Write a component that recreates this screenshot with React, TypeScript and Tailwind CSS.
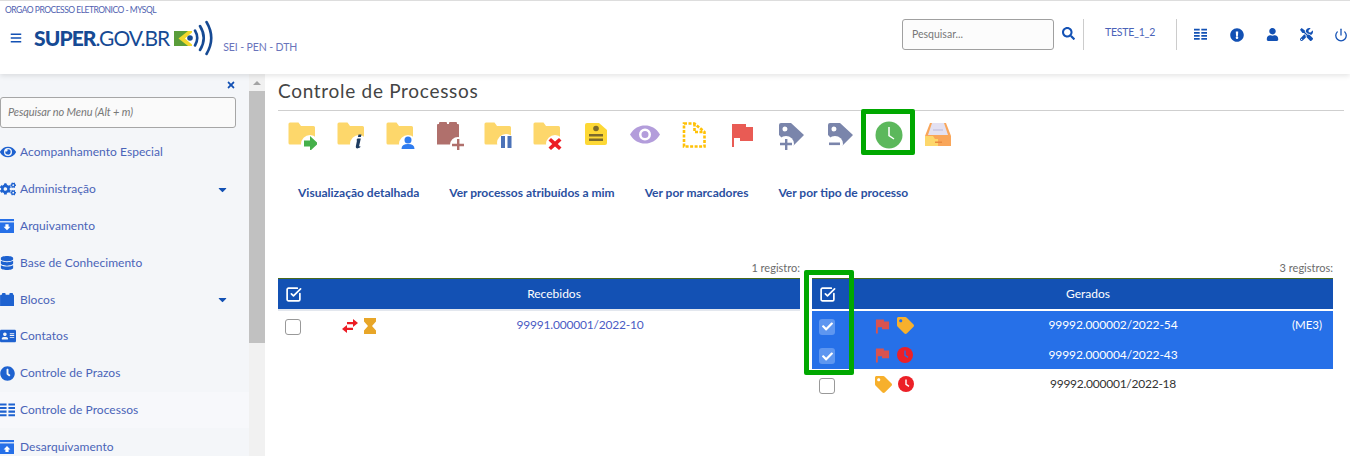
import {
  FaBars, FaCaretDown, FaCheck, FaCogs, FaDatabase, FaExclamationCircle, FaEye,
  FaSearch, FaTag, FaTimes, FaTools, FaUser, FaAddressCard, FaClock,
} from "react-icons/fa";
import { Power, SquareCheckBig } from "lucide-react";
import type { ReactNode } from "react";

const Grid = ({ className = "" }: { className?: string }) => (
  <svg viewBox="0 0 16 14" className={className} fill="currentColor">
    <path d="M0 0h7v2.200H0zM9 0h7v2.200H9zM0 3.800h7V6H0zM9 3.800h7V6H9zM0 7.600h7v2.200H0zM9 7.600h7v2.200H9zM0 11.400h7v2.200H0zM9 11.400h7v2.200H9z" />
  </svg>
);

const Flag = ({ color, className = "" }: { color: string; className?: string }) => (
  <svg viewBox="0 0 16 16" className={className} fill={color}>
    <path d="M1 1h8.500v2.200H15v8.300H7.500V9.400H3V16H1z" />
  </svg>
);

const Lego = ({ className = "" }: { className?: string }) => (
  <svg viewBox="0 0 16 14" className={className} fill="currentColor">
    <path d="M0 3q0-1 1-1h1V1q0-1 1-1h2q1 0 1 1v1h4V1q0-1 1-1h2q1 0 1 1v1h.500q.500 0 .500 1v11H0z" />
  </svg>
);

const BoxIcon = ({ up = false, className = "" }: { up?: boolean; className?: string }) => (
  <svg viewBox="0 0 14 14" className={className}>
    <path d="M0 0h14v2.200H0z" fill="#2670e8" />
    <path d="M0 3.400h14V14H0z" fill="#2670e8" />
    {up ? <path d="M7 6l3.400 3.400H8.600V12H5.400V9.400H3.600z" fill="#fff" /> : <path d="M5.400 5.200h3.200v2.600h1.800L7 11.200 3.600 7.800h1.800z" fill="#fff" />}
  </svg>
);

const ClockDisc = ({ bg, hand, className = "" }: { bg: string; hand: string; className?: string }) => (
  <svg viewBox="0 0 16 16" className={className}>
    <circle cx="8" cy="8" r="8" fill={bg} />
    <path d="M8 3.600V8.400l3 2" fill="none" stroke={hand} strokeWidth="1.400" />
  </svg>
);

const Folder = ({ children }: { children: ReactNode }) => (
  <svg viewBox="0 0 30 30" className="w-[30px] h-[30px]">
    <path d="M1.500 4q0-1.500 1.500-1.500h8.500L14 6h12.500q1.500 0 1.500 1.500V23q0 1.500-1.500 1.500H3q-1.500 0-1.500-1.500z" fill="#fdd76b" />
    {children}
  </svg>
);

const toolbar: ReactNode[] = [
  <Folder key="enviar">
    <circle cx="23" cy="24" r="9" fill="#fff" />
    <path d="M17 20.500h6V16l8 7.500-8 7.500v-4.500h-6z" fill="#45b04a" />
  </Folder>,
  <Folder key="info">
    <circle cx="23" cy="24" r="9" fill="#fff" />
    <path d="M22.500 14.500h3l-.6 2.500h-3zM21.500 18.500h3.300l-1.800 8 1.400-.5-.3 1.600c-3 1.500-4.800.8-4.200-1.500l1.200-6-1 .3z" fill="#1d3b5f" />
  </Folder>,
  <Folder key="atribuir">
    <circle cx="23" cy="24" r="9" fill="#fff" />
    <circle cx="23" cy="20" r="3.500" fill="#2f7cf0" />
    <path d="M16.500 29q0-5 6.500-5t6.500 5z" fill="#2f7cf0" />
  </Folder>,
  <svg key="bloco" viewBox="0 0 30 30" className="w-[30px] h-[30px]">
    <path d="M3 5q0-1 1-1h1V3q0-1 1-1h6q1 0 1 1v1h2V3q0-1 1-1h6q1 0 1 1v1h1q1 0 1 1v19.500H3z" fill="#b0706c" />
    <circle cx="24" cy="25" r="8" fill="#fff" />
    <path d="M23 19h2.400v4.800H30v2.400h-4.600V31H23v-4.800h-5v-2.400h5z" fill="#b0706c" />
  </svg>,
  <Folder key="sobrestar">
    <circle cx="23" cy="23" r="9" fill="#fff" />
    <path d="M18 16h4v12h-4zM24.500 16h4v12h-4z" fill="#4b72b8" />
  </Folder>,
  <Folder key="concluir">
    <circle cx="23" cy="24" r="9" fill="#fff" />
    <path d="M19 18l4 3.500 4-3.500 2.500 2.500L25.800 24l3.700 3.500L27 30l-4-3.500-4 3.500-2.500-2.500L20.200 24l-3.700-3.500z" fill="#ec1c24" />
  </Folder>,
  <svg key="anotacao" viewBox="0 0 30 30" className="w-[30px] h-[30px]">
    <path d="M4 5q0-2 2-2h12l8 7v13q0 2-2 2H6q-2 0-2-2z" fill="#fdd835" />
    <circle cx="15" cy="8.500" r="2.800" fill="#7c6a2c" />
    <path d="M8 14h14v2.500H8zM8 18.500h14V21H8z" fill="#7c6a2c" />
  </svg>,
  <svg key="olho" viewBox="0 0 30 30" className="w-[30px] h-[30px]">
    <path fillRule="evenodd" d="M0 14.500C4 8 9 5.500 15 5.500s11 2.500 15 9c-4 6.500-9 9-15 9s-11-2.500-15-9zM15 8.500a6 6 0 1 0 0 12 6 6 0 0 0 0-12zM15 11a3.500 3.500 0 1 1 0 7 3.500 3.500 0 0 1 0-7z" fill="#b39ddb" />
  </svg>,
  <svg key="doc" viewBox="0 0 30 30" className="w-[30px] h-[30px]">
    <path d="M5 3.500h10.500l10 8.500v14.500H5zM15.500 3.500v8.500h10" fill="none" stroke="#ffc107" strokeWidth="2.600" strokeDasharray="3 1.500" />
  </svg>,
  <svg key="marcador" viewBox="0 0 30 30" className="w-[30px] h-[30px]">
    <path d="M5 4h14v3h7v14H13v-3H7v9H5z" fill="#e95b54" />
  </svg>,
  <svg key="tagmais" viewBox="0 0 30 30" className="w-[30px] h-[30px]">
    <path fillRule="evenodd" d="M3 5q0-2 2-2h10l13 12-11 11H14L3 15zM9 6.500a2.500 2.500 0 1 0 0 5 2.500 2.500 0 0 0 0-5z" fill="#7a85ab" />
    <circle cx="10" cy="24" r="8" fill="#fff" />
    <path d="M9 19h2.400v3.800H16v2.400h-4.600V30H9v-4.800H4v-2.400h5z" fill="#7a85ab" />
  </svg>,
  <svg key="tagmenos" viewBox="0 0 30 30" className="w-[30px] h-[30px]">
    <path fillRule="evenodd" d="M3 5q0-2 2-2h10l13 12-11 11H14L3 15zM9 6.500a2.500 2.500 0 1 0 0 5 2.500 2.500 0 0 0 0-5z" fill="#7a85ab" />
    <circle cx="10" cy="24" r="8" fill="#fff" />
    <path d="M4 22.500h11v2.600H4z" fill="#7a85ab" />
  </svg>,
  <svg key="prazo" viewBox="0 0 30 30" className="w-[30px] h-[30px]">
    <circle cx="15" cy="15" r="13.500" fill="#5cb85c" />
    <path d="M15 7v8.500l5 3.500" fill="none" stroke="#fff" strokeWidth="1.500" />
  </svg>,
  <svg key="caixa" viewBox="0 0 30 30" className="w-[30px] h-[30px]">
    <path d="M7 3h16l5 13v10H2V16z" fill="#f9a65a" />
    <path d="M9 3h12l4 12H5z" fill="#e3e1f2" />
    <path d="M2 16h8l2 3h3v7H2z" fill="#fdd76b" />
    <path d="M10 9h10v2H10z" fill="#cfcde6" />
    <path d="M12 21.500h7v1.500h-7z" fill="#e98a3e" />
  </svg>,
];

const menu: { label: string; icon: ReactNode; caret?: boolean; active?: boolean }[] = [
  { label: "Acompanhamento Especial", icon: <FaEye className="w-[16px] h-[16px]" /> },
  { label: "Administração", icon: <FaCogs className="w-[16px] h-[16px]" />, caret: true },
  { label: "Arquivamento", icon: <BoxIcon className="w-[14px] h-[14px]" /> },
  { label: "Base de Conhecimento", icon: <FaDatabase className="w-[14px] h-[14px]" /> },
  { label: "Blocos", icon: <Lego className="w-[15px] h-[13px]" />, caret: true },
  { label: "Contatos", icon: <FaAddressCard className="w-[16px] h-[16px]" /> },
  { label: "Controle de Prazos", icon: <FaClock className="w-[15px] h-[15px]" /> },
  { label: "Controle de Processos", icon: <Grid className="w-[15px] h-[14px]" />, active: true },
  { label: "Desarquivamento", icon: <BoxIcon up className="w-[14px] h-[14px]" /> },
];

const Checkbox = ({ checked = false }: { checked?: boolean }) =>
  checked ? (
    <span className="w-4 h-4 rounded-[3px] bg-[#5e96f0] flex items-center justify-center text-white">
      <FaCheck className="w-[11px] h-[11px]" />
    </span>
  ) : (
    <span className="block w-4 h-4 rounded-[3px] border border-[#999] bg-white" />
  );

const TableHeader = ({ title, band }: { title: string; band: string }) => (
  <div className={`h-[33px] border-t border-[#4a6a1a] ${band}`}>
    <div className="h-[30px] bg-[#1351b4] grid grid-cols-[64px_424px_1fr] items-center text-white">
      <SquareCheckBig className="w-[17px] h-[17px] ml-[7px]" strokeWidth={2.400} />
      <span className="text-center text-[12px]">{title}</span>
    </div>
  </div>
);

export default function App() {
  return (
    <div className="w-[1350px] h-[456px] overflow-hidden bg-white relative flex flex-col font-['Lato','Liberation_Sans',sans-serif] text-[#3f5cb8]">
      {/* Topo */}
      <header className="h-[74px] shrink-0 border-t border-[#dddddd] bg-white shadow-[0_2px_5px_rgba(0,0,0,0.1)] z-10 flex justify-between">
        <div className="pl-[5px]">
          <div className="text-[8.5px] leading-[11px] mt-[4px] tracking-[-0.5px] text-[#4f5fb0]">ORGAO PROCESSO ELETRONICO - MYSQL</div>
          <div className="flex items-start">
            <FaBars className="w-[12px] h-[12px] ml-[5px] mt-[16px] text-[#1351b4]" />
            <div className="ml-[12px] mt-[4px] h-[36px] flex items-center text-[#164a94]">
              <span className="text-[21px] font-black tracking-[-0.9px]">SUPER</span>
              <span className="text-[21px] tracking-[-1px]">.GOV.BR</span>
              <svg viewBox="0 0 40 36" className="w-[40px] h-[36px] ml-[5px]">
                <path d="M0 11h18v15H0z" fill="#5a9d3a" />
                <path d="M14 11h4v15h-4L4.500 18.500z" fill="#f2d82c" />
                <path d="M18 12.500v12l-7-6z" fill="#fff" />
                <circle cx="16" cy="18" r="2.800" fill="#164a94" />
                <path d="M21 10.500q4.500 7.500 0 15M26 6q7.500 12 0 24M32.500 2q9.500 16 0 32" fill="none" stroke="#164a94" strokeWidth="2.600" strokeLinecap="round" />
              </svg>
              <span className="ml-[9px] mt-[20px] text-[10.5px] tracking-[-0.1px] text-[#6a74bb]">SEI - PEN - DTH</span>
            </div>
          </div>
        </div>
        <div className="flex items-start pt-[18px] text-[#1351b4]">
          <div className="w-[152px] h-[31px] border border-[#a0a0a0] rounded-[3px] bg-[#fcfcfc] px-[9px] flex items-center text-[10.5px] text-[#777]">Pesquisar...</div>
          <FaSearch className="w-[13px] h-[13px] ml-[8px] mt-[8px]" />
          <div className="w-px h-[31px] bg-[#cccccc] ml-[8px]" />
          <div className="w-[92px] h-[28px] flex items-center justify-center text-[10.5px] tracking-[-0.2px] text-[#4a62b8]">TESTE_1_2</div>
          <div className="w-px h-[31px] bg-[#cccccc]" />
          <div className="flex items-center h-[31px] pl-[17px] gap-[21px] w-[173px] overflow-hidden">
            <Grid className="w-[13px] h-[13px] shrink-0" />
            <FaExclamationCircle className="w-[14px] h-[14px] shrink-0 ml-[2px]" />
            <FaUser className="w-[13px] h-[13px] shrink-0 ml-[1px]" />
            <FaTools className="w-[13px] h-[13px] shrink-0" />
            <Power className="w-[14px] h-[14px] shrink-0" strokeWidth={2.200} />
          </div>
        </div>
      </header>

      <div className="flex-1 flex min-h-0">
        {/* Menu lateral */}
        <aside className="w-[249px] shrink-0 bg-[#f4f6f9] overflow-hidden">
          <div className="h-[23px] flex items-end justify-end pr-[13px] text-[#1351b4]">
            <FaTimes className="w-[10px] h-[10px] mb-[7px]" />
          </div>
          <div className="w-[236px] h-[31px] border border-[#a6a6a6] rounded-[3px] bg-[#fafafa] px-[7px] flex items-center text-[11px] italic tracking-[-0.1px] text-[#777]">
            Pesquisar no Menu (Alt + m)
          </div>
          <nav className="mt-[6px]">
            {menu.map((item) => (
              <div key={item.label} className={`h-[36.800px] flex items-center ${item.active ? "bg-[#f7f8fb]" : ""}`}>
                <span className="w-[20px] shrink-0 flex text-[#1e62d0]">{item.icon}</span>
                <span className="flex-1 text-[12px] tracking-[0.05px] text-[#4a64b8]">{item.label}</span>
                {item.caret && <FaCaretDown className="w-[13px] h-[13px] mr-[20px] text-[#1351b4]" />}
              </div>
            ))}
          </nav>
        </aside>

        {/* Barra de rolagem */}
        <div className="w-[16px] shrink-0 bg-[#f1f1f1] flex flex-col">
          <div className="h-[17px] flex items-center justify-center">
            <span className="border-x-[4px] border-x-transparent border-b-[4px] border-b-[#a3a3a3]" />
          </div>
          <div className="h-[252px] bg-[#c1c1c1]" />
        </div>

        {/* Conteudo */}
        <main className="flex-1 min-w-0 pl-[13px] pr-[6px]">
          <h1 className="h-[37px] pt-[4px] border-b border-[#cfcfcf] rounded-tl-[4px] text-[19px] leading-[26px] tracking-[0.7px] text-[#444]">Controle de Processos</h1>
          <div className="flex pt-[9px] h-[48px]">
            {toolbar.map((icon, i) => (
              <div key={i} className="w-[48.900px] shrink-0 flex justify-center">{icon}</div>
            ))}
          </div>
          <div className="flex gap-[30px] pl-[20px] mt-[26px] text-[12px] leading-[16px] font-bold text-[#2a4fa0]">
            <span>Visualização detalhada</span>
            <span>Ver processos atribuídos a mim</span>
            <span>Ver por marcadores</span>
            <span>Ver por tipo de processo</span>
          </div>

          <div className="flex gap-[12px] mt-[59px] w-[1055px]">
            <section className="w-[522px] shrink-0">
              <div className="h-[18px] text-right text-[11px] leading-[16px] text-[#6b6b6b]">1 registro:</div>
              <TableHeader title="Recebidos" band="bg-[#e3e7ee]" />
              <div className="h-[30px] grid grid-cols-[64px_58px_360px_40px] items-center">
                <span className="ml-[7px] mt-[2px]"><Checkbox /></span>
                <span className="flex items-center gap-[6px]">
                  <svg viewBox="0 0 16 14" className="w-[16px] h-[14px]" fill="#ec1c24">
                    <path d="M5 3h6V0l5 4-5 4V5.300H5zM11 8.700H5V6L0 10l5 4v-3h6z" />
                  </svg>
                  <svg viewBox="0 0 12 16" className="w-[12px] h-[16px]" fill="#e8a628">
                    <path d="M0 0h12v3.500L8 8l4 4.500V16H0v-3.500L4 8 0 3.500z" />
                  </svg>
                </span>
                <span className="text-center mb-[2px] text-[12px] tracking-[-0.2px] text-[#4b5cc4]">99991.000001/2022-10</span>
              </div>
            </section>

            <section className="w-[521px] shrink-0">
              <div className="h-[18px] text-right text-[11px] leading-[16px] text-[#6b6b6b]">3 registros:</div>
              <TableHeader title="Gerados" band="bg-white" />
              <div className="h-[29px] bg-[#2670e8] grid grid-cols-[63px_70px_336px_52px] items-center text-white">
                <span className="ml-[7px] mt-[2px]"><Checkbox checked /></span>
                <span className="flex items-center gap-[7px]">
                  <Flag color="#d9534f" className="w-[15px] h-[16px]" />
                  <FaTag className="w-[17px] h-[17px] text-[#f7b02c]" />
                </span>
                <span className="text-center mb-[2px] text-[12px] tracking-[-0.1px]">99992.000002/2022-54</span>
                <span className="text-center mb-[2px] text-[11.5px]">(ME3)</span>
              </div>
              <div className="h-[29px] bg-[#2670e8] grid grid-cols-[63px_70px_336px_52px] items-center text-white">
                <span className="ml-[7px] mt-[3px]"><Checkbox checked /></span>
                <span className="flex items-center gap-[7px]">
                  <Flag color="#d9534f" className="w-[15px] h-[16px]" />
                  <ClockDisc bg="#ec2027" hand="#2670e8" className="w-[16px] h-[16px]" />
                </span>
                <span className="text-center text-[12px] tracking-[-0.1px]">99992.000004/2022-43</span>
              </div>
              <div className="h-[30px] grid grid-cols-[63px_70px_336px_52px] items-center text-[#333]">
                <span className="ml-[7px] mt-[4px]"><Checkbox /></span>
                <span className="flex items-center gap-[6px]">
                  <FaTag className="w-[17px] h-[17px] text-[#f7b02c]" />
                  <ClockDisc bg="#ec2027" hand="#fff" className="w-[16px] h-[16px]" />
                </span>
                <span className="text-center text-[12px] tracking-[-0.25px]">99992.000001/2022-18</span>
              </div>
            </section>
          </div>
        </main>
      </div>

      {/* Destaques verdes sobre o print */}
      <div className="absolute left-[861px] top-[109px] w-[54px] h-[46px] border-[5px] border-[#00a800] rounded-[2px]" />
      <div className="absolute left-[804px] top-[270px] w-[50px] h-[105px] border-[5px] border-[#00a800] rounded-[2px]" />
    </div>
  );
}
